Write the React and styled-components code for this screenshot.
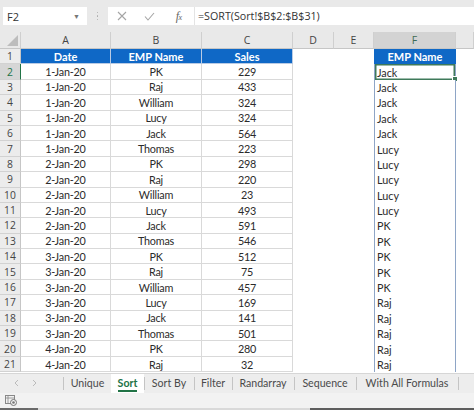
import React from "react";
import styled, { createGlobalStyle } from "styled-components";

const Global = createGlobalStyle`
  html, body { margin: 0; padding: 0; background: #fff; }
  * { box-sizing: border-box; }
`;

const Root = styled.div`
  width: 474px;
  height: 410px;
  overflow: hidden;
  display: flex;
  flex-direction: column;
  background: #fff;
  font-family: "Lato", "Open Sans", sans-serif;
`;

const FormulaBar = styled.div`
  height: 32px;
  flex: none;
  background: #e9e9e9;
  display: flex;
  align-items: center;
  padding: 0 0 0 3px;
`;

const NameBox = styled.div`
  width: 84px;
  height: 18px;
  background: #fff;
  display: flex;
  align-items: center;
  justify-content: space-between;
  padding: 0 7px 0 4px;
  font-family: "Open Sans", sans-serif;
  font-size: 11px;
  color: #333;
`;

const Caret = styled.span`
  font-size: 7px;
  color: #777;
`;

const Dots = styled.div`
  width: 21px;
  display: flex;
  flex-direction: column;
  align-items: center;
  gap: 2px;
  span {
    width: 1.5px;
    height: 1.5px;
    background: #aaa;
    border-radius: 50%;
  }
`;

const FormulaBox = styled.div`
  flex: 1;
  height: 18px;
  background: #fff;
  display: flex;
  align-items: center;
`;

const FxButtons = styled.div`
  width: 87px;
  height: 100%;
  display: flex;
  align-items: center;
  border-right: 1px solid #e4e4e4;
`;

const FxIcon = styled.div`
  width: ${(p) => p.$w}px;
  display: flex;
  justify-content: center;
  align-items: center;
  color: #9a9a9a;
`;

const FxText = styled.span`
  font-family: "Liberation Serif", serif;
  font-style: italic;
  font-size: 12px;
  color: #666;
  letter-spacing: -0.5px;
  sub {
    font-size: 8px;
    vertical-align: baseline;
  }
`;

const FormulaText = styled.div`
  padding-left: 3px;
  font-family: "Open Sans", sans-serif;
  font-size: 10.7px;
  color: #333;
  white-space: nowrap;
`;

const Sheet = styled.div`
  flex: none;
  display: grid;
  grid-template-columns: 21px 90px 91px 91px 41px 40px 82px 18px;
  grid-template-rows: 17px repeat(21, 15.4px);
`;

const ColHead = styled.div`
  background: ${(p) => (p.$sel ? "#d3d3d3" : "#e9e9e9")};
  border-right: 1px solid #cfcfcf;
  border-bottom: 1px solid #c6c6c6;
  display: flex;
  align-items: center;
  justify-content: center;
  font-family: "Open Sans", sans-serif;
  font-size: 10.5px;
  color: ${(p) => (p.$sel ? "#3d6b53" : "#444")};
  position: relative;
`;

const Corner = styled(ColHead)`
  svg { position: absolute; right: 2px; bottom: 2px; }
`;

const RowHead = styled.div`
  background: ${(p) => (p.$sel ? "#d6d6d6" : "#ececec")};
  border-right: 1px solid ${(p) => (p.$sel ? "#217346" : "#c6c6c6")};
  border-bottom: 1px solid #d2d2d2;
  display: flex;
  align-items: center;
  justify-content: center;
  font-family: "Open Sans", sans-serif;
  font-size: 10.3px;
  color: ${(p) => (p.$sel ? "#217346" : "#444")};
`;

const Cell = styled.div`
  border-right: 1px solid ${(p) => (p.$head ? "#b9cbe4" : "#d9d9d9")};
  border-bottom: 1px solid ${(p) => (p.$head ? "#b9cbe4" : "#d9d9d9")};
  background: ${(p) => (p.$head ? "#0f68c6" : "#fff")};
  color: ${(p) => (p.$head ? "#fff" : "#2b2b2b")};
  font-weight: ${(p) => (p.$head ? 700 : 400)};
  font-size: ${(p) => (p.$head ? "11px" : "10.8px")};
  letter-spacing: ${(p) => (p.$head ? "0" : "-0.2px")};
  display: flex;
  align-items: center;
  justify-content: center;
  white-space: nowrap;
`;

const Blank = styled.div`
  background: #fff;
`;

const SpillCell = styled.div`
  position: relative;
  background: ${(p) => (p.$head ? "#0f68c6" : "#fff")};
  color: ${(p) => (p.$head ? "#fff" : "#2b2b2b")};
  font-weight: ${(p) => (p.$head ? 700 : 400)};
  font-size: ${(p) => (p.$head ? "11px" : "10.8px")};
  display: flex;
  align-items: center;
  justify-content: ${(p) => (p.$head ? "center" : "flex-start")};
  padding-left: ${(p) => (p.$head ? 0 : 2)}px;
  border-left: 1px solid ${(p) => (p.$head ? "#0f68c6" : "#8ea5c6")};
  border-right: 1px solid ${(p) => (p.$head ? "#0f68c6" : "#8ea5c6")};
  box-shadow: ${(p) => (p.$sel ? "inset 0 0 0 1.5px #3f7a5a" : "none")};
  white-space: nowrap;
`;

const FillHandle = styled.span`
  position: absolute;
  right: -3px;
  bottom: -2px;
  width: 4px;
  height: 4px;
  background: #3f7a5a;
  border: 1px solid #fff;
  box-sizing: content-box;
`;

const TabBar = styled.div`
  flex: none;
  height: 20px;
  margin-top: 0.6px;
  background: #ededed;
  border-top: 1px solid #d6d6d6;
  display: flex;
  align-items: stretch;
`;

const TabNav = styled.div`
  width: 63px;
  display: flex;
  align-items: center;
  padding-left: 14px;
  gap: 13px;
  color: #b5b5b5;
`;

const Tab = styled.div`
  width: ${(p) => p.$w}px;
  flex: none;
  display: flex;
  align-items: center;
  justify-content: center;
  position: relative;
  background: ${(p) => (p.$active ? "#fff" : "transparent")};
  font-family: "Lato", sans-serif;
  font-size: 10.6px;
  font-weight: ${(p) => (p.$active ? 700 : 400)};
  color: ${(p) => (p.$active ? "#217346" : "#4a4a4a")};
  white-space: nowrap;
  &::before {
    content: "";
    display: ${(p) => (p.$active || p.$noSep ? "none" : "block")};
    position: absolute;
    left: 0;
    top: 3px;
    bottom: 3px;
    width: 1px;
    background: #c4c4c4;
  }
`;

const ActiveLine = styled.span`
  position: relative;
  &::after {
    content: "";
    position: absolute;
    left: 0;
    right: 0;
    bottom: -3px;
    height: 2px;
    background: #217346;
  }
`;

const TabEnd = styled.div`
  width: 1px;
  margin: 3px 0;
  background: #c4c4c4;
`;

const StatusBar = styled.div`
  flex: none;
  height: 15px;
  background: #f2f2f2;
  display: flex;
  align-items: center;
  padding-left: 5px;
`;

const Strip = styled.div`
  flex: 1;
  display: flex;
`;

const StripSeg = styled.div`
  width: ${(p) => p.$w}px;
  flex: ${(p) => (p.$grow ? 1 : "none")};
  background: ${(p) => p.$c};
`;

const data = [
  ["1-Jan-20", "PK", "229", "Jack"],
  ["1-Jan-20", "Raj", "433", "Jack"],
  ["1-Jan-20", "William", "324", "Jack"],
  ["1-Jan-20", "Lucy", "324", "Jack"],
  ["1-Jan-20", "Jack", "564", "Jack"],
  ["1-Jan-20", "Thomas", "223", "Lucy"],
  ["2-Jan-20", "PK", "298", "Lucy"],
  ["2-Jan-20", "Raj", "220", "Lucy"],
  ["2-Jan-20", "William", "23", "Lucy"],
  ["2-Jan-20", "Lucy", "493", "Lucy"],
  ["2-Jan-20", "Jack", "591", "PK"],
  ["2-Jan-20", "Thomas", "546", "PK"],
  ["3-Jan-20", "PK", "512", "PK"],
  ["3-Jan-20", "Raj", "75", "PK"],
  ["3-Jan-20", "William", "457", "PK"],
  ["3-Jan-20", "Lucy", "169", "Raj"],
  ["3-Jan-20", "Jack", "141", "Raj"],
  ["3-Jan-20", "Thomas", "501", "Raj"],
  ["4-Jan-20", "PK", "280", "Raj"],
  ["4-Jan-20", "Raj", "32", "Raj"],
];

const tabs = [
  { name: "Unique", w: 47, noSep: true },
  { name: "Sort", w: 33, active: true },
  { name: "Sort By", w: 50 },
  { name: "Filter", w: 38 },
  { name: "Randarray", w: 62 },
  { name: "Sequence", w: 62 },
  { name: "With All Formulas", w: 102 },
];

export default function App() {
  return (
    <Root>
      <Global />
      <FormulaBar>
        <NameBox>
          F2
          <Caret>▼</Caret>
        </NameBox>
        <Dots>
          <span />
          <span />
          <span />
        </Dots>
        <FormulaBox>
          <FxButtons>
            <FxIcon $w={28}>
              <svg width="10" height="10" viewBox="0 0 10 10">
                <path d="M1 1 L9 9 M9 1 L1 9" stroke="#a5a5a5" strokeWidth="1.1" fill="none" />
              </svg>
            </FxIcon>
            <FxIcon $w={28}>
              <svg width="11" height="9" viewBox="0 0 11 9">
                <path d="M1 4.5 L4 8 L10 1" stroke="#a5a5a5" strokeWidth="1.1" fill="none" />
              </svg>
            </FxIcon>
            <FxIcon $w={31}>
              <FxText>
                f<sub>x</sub>
              </FxText>
            </FxIcon>
          </FxButtons>
          <FormulaText>=SORT(Sort!$B$2:$B$31)</FormulaText>
        </FormulaBox>
      </FormulaBar>

      <Sheet>
        <Corner>
          <svg width="11" height="11" viewBox="0 0 11 11">
            <path d="M11 0 L11 11 L0 11 Z" fill="#bdbdbd" />
          </svg>
        </Corner>
        {["A", "B", "C", "D", "E", "F", ""].map((c, i) => (
          <ColHead key={i} $sel={c === "F"}>
            {c}
          </ColHead>
        ))}

        <RowHead>1</RowHead>
        <Cell $head>Date</Cell>
        <Cell $head>EMP Name</Cell>
        <Cell $head>Sales</Cell>
        <Blank />
        <Blank />
        <SpillCell $head>EMP Name</SpillCell>
        <Blank />

        {data.map((r, i) => (
          <React.Fragment key={i}>
            <RowHead $sel={i === 0}>{i + 2}</RowHead>
            <Cell>{r[0]}</Cell>
            <Cell>{r[1]}</Cell>
            <Cell>{r[2]}</Cell>
            <Blank />
            <Blank />
            <SpillCell $sel={i === 0}>
              {r[3]}
              {i === 0 && <FillHandle />}
            </SpillCell>
            <Blank />
          </React.Fragment>
        ))}
      </Sheet>

      <TabBar>
        <TabNav>
          <svg width="5" height="8" viewBox="0 0 5 8">
            <path d="M4 1 L1 4 L4 7" stroke="#bbb" strokeWidth="1" fill="none" />
          </svg>
          <svg width="5" height="8" viewBox="0 0 5 8">
            <path d="M1 1 L4 4 L1 7" stroke="#bbb" strokeWidth="1" fill="none" />
          </svg>
        </TabNav>
        <TabEnd />
        {tabs.map((t) => (
          <Tab key={t.name} $w={t.w} $active={t.active} $noSep={t.noSep}>
            {t.active ? <ActiveLine>{t.name}</ActiveLine> : t.name}
          </Tab>
        ))}
        <TabEnd />
      </TabBar>

      <StatusBar>
        <svg width="12" height="11" viewBox="0 0 12 11">
          <rect x="0.5" y="0.5" width="9" height="8" fill="none" stroke="#888" strokeWidth="1" />
          <path d="M0.5 3 H9.5 M3 0.5 V8.5" stroke="#888" strokeWidth="0.8" />
          <circle cx="8.5" cy="7.5" r="3" fill="#f2f2f2" stroke="#777" strokeWidth="1" />
          <circle cx="8.5" cy="7.5" r="1.3" fill="#777" />
        </svg>
      </StatusBar>
      <Strip>
        <StripSeg $w={38} $c="#6a6a6a" />
        <StripSeg $w={272} $c="#d9d9d9" />
        <StripSeg $grow $c="#5e5e5e" />
      </Strip>
    </Root>
  );
}
